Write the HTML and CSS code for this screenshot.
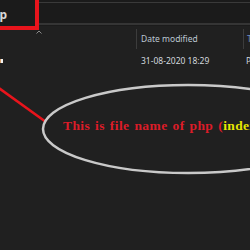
FILE: index.html
```html
<!DOCTYPE html>
<html lang="en">
<head>
    <meta charset="UTF-8">
    <title>php folder</title>
    <link rel="stylesheet" href="styles.css">
</head>
<body>
    <div class="explorer">
        <div class="addressbar">
            <div class="crumb-box"><span class="crumb">php</span></div>
            <div class="addr-rest"></div>
        </div>
        <div class="headers">
            <div class="col-name">
                <svg class="caret" width="6" height="4" viewBox="0 0 6 4">
                    <polyline points="0.5,3.5 3,1 5.5,3.5" fill="none" stroke="#8c8c8c" stroke-width="1"/>
                </svg>
            </div>
            <div class="col-date">Date modified</div>
            <div class="col-type">Type</div>
        </div>
        <div class="row">
            <div class="col-name"><span class="file-icon"></span></div>
            <div class="col-date">31-08-2020 18:29</div>
            <div class="col-type">PHP File</div>
        </div>
    </div>

    <!-- annotation drawn over the screenshot -->
    <svg class="markup" width="250" height="250" viewBox="0 0 250 250">
        <line x1="-4" y1="86" x2="46" y2="122" stroke="#e8141c" stroke-width="2.5"/>
        <ellipse cx="188" cy="129" rx="145" ry="44" fill="none" stroke="#c9c9c9" stroke-width="2.5"/>
    </svg>
    <div class="note">This is file name of php (<span class="hl">index.php</span>)</div>
</body>
</html>
```

FILE: styles.css
```css
body {
    margin: 0;
    width: 250px;
    height: 250px;
    overflow: hidden;
    background-color: #202020;
    font-family: "Noto Sans", sans-serif;
    font-size: 8.5px;
    position: relative;
}
.addressbar {
    display: flex;
    height: 26px;
    background-color: #1b1b1b;
}
.crumb-box {
    width: 48px;
    height: 26px;
    margin-left: -17px;
    margin-top: -4px;
    border: 4px solid #e8141c;
    display: flex;
    align-items: center;
    justify-content: flex-end;
    flex-shrink: 0;
}
.crumb {
    color: #d8d8d8;
    font-weight: bold;
    font-size: 12px;
    margin-right: 28px;
    margin-top: 2px;
}
.addr-rest {
    flex: 1;
    margin-top: 2px;
    height: 20px;
    border-top: 1px solid #3a3a3a;
    border-bottom: 2px solid #353535;
}
.headers, .row {
    display: flex;
}
.headers {
    height: 20px;
    margin-top: 3px;
}
.col-name {
    width: 136px;
    flex-shrink: 0;
}
.col-date {
    width: 102px;
    flex-shrink: 0;
    padding-left: 4px;
}
.col-type {
    padding-left: 3px;
    white-space: nowrap;
    color: #6e8cc8;
}
.headers .col-date {
    border-left: 1px solid #3c3c3c;
    border-right: 1px solid #3c3c3c;
    color: #bcc7d2;
    line-height: 20px;
}
.headers .col-type {
    line-height: 20px;
}
.caret {
    display: block;
    margin-left: 36px;
    margin-top: 1px;
}
.row {
    height: 20px;
    margin-top: 2px;
    line-height: 20px;
}
.row .col-date {
    padding-left: 5px;
    color: #d2d8de;
}
.row .col-type {
    color: #d2d8de;
}
.file-icon {
    display: block;
    width: 3px;
    height: 4px;
    margin-top: 8px;
    background: linear-gradient(to right, #d9a06a 50%, #f0f0f0 50%);
}
.markup {
    position: absolute;
    left: 0;
    top: 0;
}
.note {
    position: absolute;
    left: 63px;
    top: 118px;
    white-space: nowrap;
    font-family: "Liberation Serif", serif;
    font-weight: bold;
    font-size: 13.5px;
    letter-spacing: 0.4px;
    word-spacing: 1.2px;
    color: #dc1c28;
}
.hl {
    color: #e6e600;
}
```
